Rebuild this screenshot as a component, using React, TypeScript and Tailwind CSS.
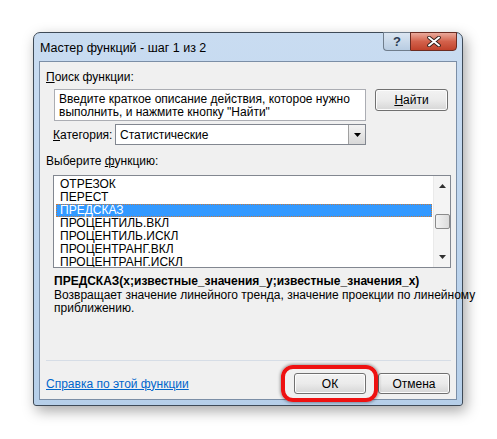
import React from 'react';

const items = [
  'ОТРЕЗОК',
  'ПЕРЕСТ',
  'ПРЕДСКАЗ',
  'ПРОЦЕНТИЛЬ.ВКЛ',
  'ПРОЦЕНТИЛЬ.ИСКЛ',
  'ПРОЦЕНТРАНГ.ВКЛ',
  'ПРОЦЕНТРАНГ.ИСКЛ',
];

const font = { fontFamily: '"Liberation Sans", Arial, sans-serif' };

const WinButton: React.FC<{ children: React.ReactNode; className?: string }> = ({ children, className = '' }) => (
  <button
    className={
      'flex items-center justify-center rounded-[3px] border border-[#707070] bg-gradient-to-b from-[#f2f2f2] via-[#ebebeb] to-[#d6d6d6] text-[12px] text-black shadow-[inset_0_0_0_1px_#fcfcfc] ' +
      className
    }
  >
    {children}
  </button>
);

export default function App() {
  return (
    <div className="w-[497px] h-[439px] bg-white pt-[32px] pl-[33px]" style={font}>
      <div className="w-[430px] h-[374px] flex flex-col rounded-t-[7px] rounded-b-[3px] border border-[#3e4a57] bg-gradient-to-b from-[#c9dcf1] via-[#bed5ee] to-[#b6cfe9] shadow-[3px_5px_14px_rgba(0,0,0,0.35)]">
        {/* title bar */}
        <div className="h-[28px] flex justify-between">
          <div className="pl-[6px] pt-[7px] text-[12.5px] leading-[16px] text-black">Мастер функций - шаг 1 из 2</div>
          <div className="flex mr-[5px] -mt-px h-[19px]">
            <div className="w-[27px] flex items-center justify-center rounded-bl-[4px] border border-[#6f7d8c] border-r-0 bg-gradient-to-b from-[#dbe6f2] to-[#b8cce2] text-[#2b3b52] text-[13px] font-bold leading-none">
              ?
            </div>
            <div className="w-[47px] flex items-center justify-center rounded-br-[4px] border border-[#6b2c22] bg-gradient-to-b from-[#e9a99b] via-[#d3614b] to-[#c0422b]">
              <svg width="14" height="11" viewBox="0 0 14 11">
                <path d="M2 1.5 L12 9.5 M12 1.5 L2 9.5" stroke="#2b1a16" strokeWidth="3.6" strokeLinecap="round" />
                <path d="M2 1.5 L12 9.5 M12 1.5 L2 9.5" stroke="#ffffff" strokeWidth="2" strokeLinecap="round" />
              </svg>
            </div>
          </div>
        </div>

        {/* client area */}
        <div className="mx-[5px] h-[339px] border border-[#7b8ea6] bg-[#f0f0f0] text-[12px] text-black flex flex-col">
          <div className="pl-[6px] mt-[8px] leading-[14px]">
            <span className="underline">П</span>оиск функции:
          </div>

          <div className="flex mt-[5px] ml-[14px]">
            <div className="w-[312px] h-[32px] border border-[#abadb3] bg-white px-[4px] pt-[3px] leading-[13px]">
              Введите краткое описание действия, которое нужно выполнить, и нажмите кнопку "Найти"
            </div>
            <WinButton className="ml-[9px] w-[73px] h-[22px]">
              <span>
                <span className="underline">Н</span>айти
              </span>
            </WinButton>
          </div>

          <div className="flex items-center mt-[3px] ml-[13px]">
            <span className="w-[62px] leading-[14px]">
              <span className="underline">К</span>атегория:
            </span>
            <div className="w-[251px] h-[21px] flex items-center border border-[#828790] bg-white">
              <span className="flex-1 pl-[4px]">Статистические</span>
              <div className="w-[17px] h-[19px] flex items-center justify-center border-l border-[#a0a0a0] bg-gradient-to-b from-[#f3f3f3] to-[#d8d8d8]">
                <svg width="7" height="4" viewBox="0 0 7 4">
                  <path d="M0 0 H7 L3.5 4 Z" fill="#000" />
                </svg>
              </div>
            </div>
          </div>

          <div className="pl-[6px] mt-[9px] leading-[14px]">
            Выберите <span className="underline">ф</span>ункцию:
          </div>

          <div className="mt-[7px] ml-[13px] w-[398px] h-[93px] flex border border-[#828790] bg-white overflow-hidden">
            <div className="flex-1 pt-[2px] pl-[2px] pr-[1px]">
              {items.map((it, i) => (
                <div
                  key={it}
                  className={
                    i === 2
                      ? 'h-[13px] leading-[11px] pl-[3px] bg-[#3399ff] text-white border border-dotted border-[#c87a3c]'
                      : 'h-[13px] leading-[13px] pl-[4px]'
                  }
                >
                  {it}
                </div>
              ))}
            </div>
            <div className="w-[17px] flex flex-col items-center bg-[#f4f4f4] border-l border-[#eaeaea]">
              <svg className="mt-[8px]" width="7" height="4" viewBox="0 0 7 4">
                <path d="M3.5 0 L7 4 H0 Z" fill="#303030" />
              </svg>
              <div className="mt-[26px] w-[15px] h-[15px] rounded-[2px] border border-[#8b8b8b] bg-gradient-to-r from-[#f3f3f3] to-[#dcdcdc]" />
              <svg className="mt-auto mb-[8px]" width="7" height="4" viewBox="0 0 7 4">
                <path d="M0 0 H7 L3.5 4 Z" fill="#303030" />
              </svg>
            </div>
          </div>

          <div className="ml-[14px] mt-[6px] font-bold leading-[14px]">
            ПРЕДСКАЗ(x;известные_значения_y;известные_значения_x)
          </div>
          <div className="ml-[14px] mt-[1px] leading-[13px] whitespace-nowrap">
            Возвращает значение линейного тренда, значение проекции по линейному
            <br />
            приближению.
          </div>

          <div className="ml-[6px] mt-[45px] w-[405px] h-[1px] bg-[#d6dde6]" />

          <div className="flex items-center ml-[6px] mt-[12px]">
            <span className="text-[#0066cc] underline leading-[14px]">Справка по этой функции</span>
            <div className="relative ml-auto">
              <WinButton className="w-[72px] h-[21px] border-[#3c7fb1] shadow-[inset_0_0_0_1px_#bfe3f8]">ОК</WinButton>
              <span className="absolute -left-[13px] -right-[12px] -top-[8px] -bottom-[8px] rounded-[12px] border-[4px] border-[#ee1111] shadow-[0_0_3px_1px_rgba(0,0,0,0.35)]" />
            </div>
            <WinButton className="ml-[12px] mr-[6px] w-[72px] h-[21px]">Отмена</WinButton>
          </div>
        </div>
      </div>
    </div>
  );
}
